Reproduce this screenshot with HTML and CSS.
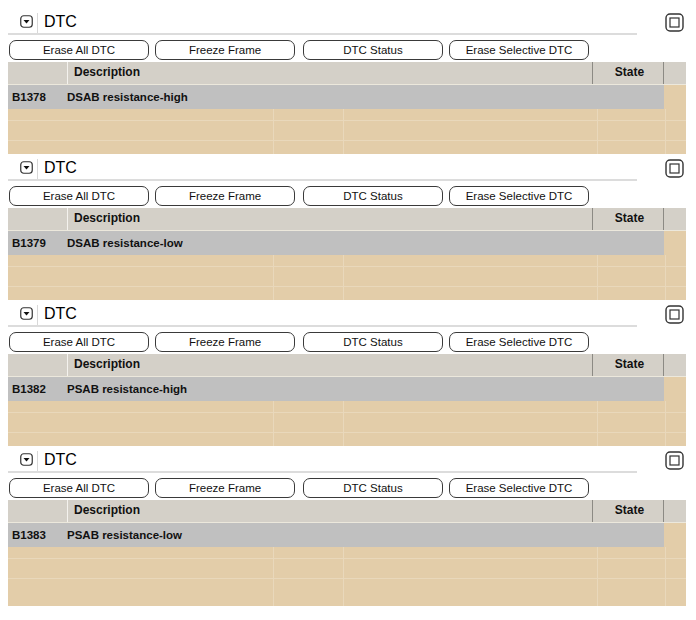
FILE: index.html
```html
<!DOCTYPE html>
<html>
<head>
<meta charset="utf-8">
<link rel="stylesheet" href="styles.css">
</head>
<body>
<div class="page">
  <section class="panel">
    <div class="titlebar">
      <div class="title">
        <svg class="toggle" width="13" height="13" viewBox="0 0 13 13"><rect x="0.75" y="0.75" width="11.5" height="11.5" rx="3" fill="#fff" stroke="#333" stroke-width="1.2"/><path d="M3.5 5 L9.5 5 L6.5 8.5 Z" fill="#111"/></svg>
        <span class="sep"></span>
        <span class="name">DTC</span>
      </div>
      <svg class="maxbtn" width="19" height="19" viewBox="0 0 19 19"><rect x="1" y="1" width="17" height="17" rx="4" fill="#fff" stroke="#333" stroke-width="1.4"/><rect x="5" y="5" width="9" height="9" fill="none" stroke="#333" stroke-width="1.2"/></svg>
    </div>
    <div class="buttons">
      <button class="btn">Erase All DTC</button>
      <button class="btn">Freeze Frame</button>
      <button class="btn">DTC Status</button>
      <button class="btn">Erase Selective DTC</button>
    </div>
    <div class="thead">
      <div class="th c0"></div>
      <div class="th c1">Description</div>
      <div class="th c2">State</div>
      <div class="th c3"></div>
    </div>
    <div class="row">
      <div class="cell code">B1378</div>
      <div class="cell desc">DSAB resistance-high</div>
      <div class="rest"></div>
    </div>
    <div class="empty"><div class="er r1"></div><div class="er r2"></div><div class="er r3"></div></div>
  </section>

  <section class="panel">
    <div class="titlebar">
      <div class="title">
        <svg class="toggle" width="13" height="13" viewBox="0 0 13 13"><rect x="0.75" y="0.75" width="11.5" height="11.5" rx="3" fill="#fff" stroke="#333" stroke-width="1.2"/><path d="M3.5 5 L9.5 5 L6.5 8.5 Z" fill="#111"/></svg>
        <span class="sep"></span>
        <span class="name">DTC</span>
      </div>
      <svg class="maxbtn" width="19" height="19" viewBox="0 0 19 19"><rect x="1" y="1" width="17" height="17" rx="4" fill="#fff" stroke="#333" stroke-width="1.4"/><rect x="5" y="5" width="9" height="9" fill="none" stroke="#333" stroke-width="1.2"/></svg>
    </div>
    <div class="buttons">
      <button class="btn">Erase All DTC</button>
      <button class="btn">Freeze Frame</button>
      <button class="btn">DTC Status</button>
      <button class="btn">Erase Selective DTC</button>
    </div>
    <div class="thead">
      <div class="th c0"></div>
      <div class="th c1">Description</div>
      <div class="th c2">State</div>
      <div class="th c3"></div>
    </div>
    <div class="row">
      <div class="cell code">B1379</div>
      <div class="cell desc">DSAB resistance-low</div>
      <div class="rest"></div>
    </div>
    <div class="empty"><div class="er r1"></div><div class="er r2"></div><div class="er r3"></div></div>
  </section>

  <section class="panel">
    <div class="titlebar">
      <div class="title">
        <svg class="toggle" width="13" height="13" viewBox="0 0 13 13"><rect x="0.75" y="0.75" width="11.5" height="11.5" rx="3" fill="#fff" stroke="#333" stroke-width="1.2"/><path d="M3.5 5 L9.5 5 L6.5 8.5 Z" fill="#111"/></svg>
        <span class="sep"></span>
        <span class="name">DTC</span>
      </div>
      <svg class="maxbtn" width="19" height="19" viewBox="0 0 19 19"><rect x="1" y="1" width="17" height="17" rx="4" fill="#fff" stroke="#333" stroke-width="1.4"/><rect x="5" y="5" width="9" height="9" fill="none" stroke="#333" stroke-width="1.2"/></svg>
    </div>
    <div class="buttons">
      <button class="btn">Erase All DTC</button>
      <button class="btn">Freeze Frame</button>
      <button class="btn">DTC Status</button>
      <button class="btn">Erase Selective DTC</button>
    </div>
    <div class="thead">
      <div class="th c0"></div>
      <div class="th c1">Description</div>
      <div class="th c2">State</div>
      <div class="th c3"></div>
    </div>
    <div class="row">
      <div class="cell code">B1382</div>
      <div class="cell desc">PSAB resistance-high</div>
      <div class="rest"></div>
    </div>
    <div class="empty"><div class="er r1"></div><div class="er r2"></div><div class="er r3"></div></div>
  </section>

  <section class="panel last">
    <div class="titlebar">
      <div class="title">
        <svg class="toggle" width="13" height="13" viewBox="0 0 13 13"><rect x="0.75" y="0.75" width="11.5" height="11.5" rx="3" fill="#fff" stroke="#333" stroke-width="1.2"/><path d="M3.5 5 L9.5 5 L6.5 8.5 Z" fill="#111"/></svg>
        <span class="sep"></span>
        <span class="name">DTC</span>
      </div>
      <svg class="maxbtn" width="19" height="19" viewBox="0 0 19 19"><rect x="1" y="1" width="17" height="17" rx="4" fill="#fff" stroke="#333" stroke-width="1.4"/><rect x="5" y="5" width="9" height="9" fill="none" stroke="#333" stroke-width="1.2"/></svg>
    </div>
    <div class="buttons">
      <button class="btn">Erase All DTC</button>
      <button class="btn">Freeze Frame</button>
      <button class="btn">DTC Status</button>
      <button class="btn">Erase Selective DTC</button>
    </div>
    <div class="thead">
      <div class="th c0"></div>
      <div class="th c1">Description</div>
      <div class="th c2">State</div>
      <div class="th c3"></div>
    </div>
    <div class="row">
      <div class="cell code">B1383</div>
      <div class="cell desc">PSAB resistance-low</div>
      <div class="rest"></div>
    </div>
    <div class="empty"><div class="er r1"></div><div class="er r2"></div><div class="er r3"></div><div class="er r4"></div></div>
  </section>
</div>
</body>
</html>
```
FILE: styles.css
```css
* { box-sizing: border-box; }
html, body { margin: 0; padding: 0; background: #fff; }
body { font-family: "Liberation Sans", Arial, sans-serif; color: #000; }

.page { padding: 8px 0 0 8px; width: 696px; }

.panel { width: 678px; display: flex; flex-direction: column; }

.titlebar { display: flex; align-items: flex-start; height: 27px; }
.title {
  width: 629px; height: 27px;
  border-bottom: 2px solid #dcdcdc;
  display: flex; align-items: center;
}
.toggle { margin-left: 12px; margin-top: 2px; display: block; }
.sep { width: 1px; height: 20px; background: #d8d8d8; margin: 5px 6px 0 4px; align-self: flex-start; }
.name { font-size: 16px; line-height: 20px; margin-top: 3px; }
.maxbtn { margin-left: 28px; margin-top: 5px; display: block; }

.buttons { display: flex; margin-top: 5px; height: 20px; padding-left: 1px; }
.btn {
  width: 140px; height: 20px; margin: 0 6px 0 0; padding: 0;
  border: 1px solid #3a3a3a; border-radius: 7px; background: #fff;
  font-family: "Liberation Sans", Arial, sans-serif; font-size: 11.5px; color: #111;
  line-height: 18px;
}
.btn:nth-child(2) { margin-right: 8px; }

.thead { display: flex; margin-top: 2px; height: 23px; background: #d4d0c8; border-bottom: 1px solid #ece8dc; }
.th { font-size: 12px; font-weight: bold; line-height: 20px; color: #111; height: 22px; }
.c0 { width: 60px; border-right: 1px solid #f4f2ee; }
.c1 { width: 525px; padding-left: 6px; border-right: 1px solid #8c8a84; }
.c2 { width: 71px; text-align: center; padding-left: 3px; border-right: 1px solid #8c8a84; }
.c3 { flex: 1; }

.row { display: flex; height: 24px; background: #e3cda9; }
.cell { background: #c0c0c0; font-size: 11.5px; font-weight: bold; line-height: 25px; color: #111; }
.code { width: 59px; padding-left: 4px; }
.desc { width: 597px; }
.rest { flex: 1; }

.empty { height: 45px; background: #e3cda9; display: flex; flex-direction: column; }
.last .empty { height: 59px; }
.er {
  border-bottom: 1px solid #e9d8bb;
  background:
    linear-gradient(#e9d8bb, #e9d8bb) 265px 0 / 1px 100% no-repeat,
    linear-gradient(#e9d8bb, #e9d8bb) 335px 0 / 1px 100% no-repeat,
    linear-gradient(#e9d8bb, #e9d8bb) 589px 0 / 1px 100% no-repeat,
    linear-gradient(#e9d8bb, #e9d8bb) 657px 0 / 1px 100% no-repeat;
}
.r1 { height: 12px; }
.r2 { height: 20px; }
.r3 { flex: 1; border-bottom: 0; }
.last .r3 { height: 14px; flex: none; }
.r4 { flex: 1; border-bottom: 0; }
```
